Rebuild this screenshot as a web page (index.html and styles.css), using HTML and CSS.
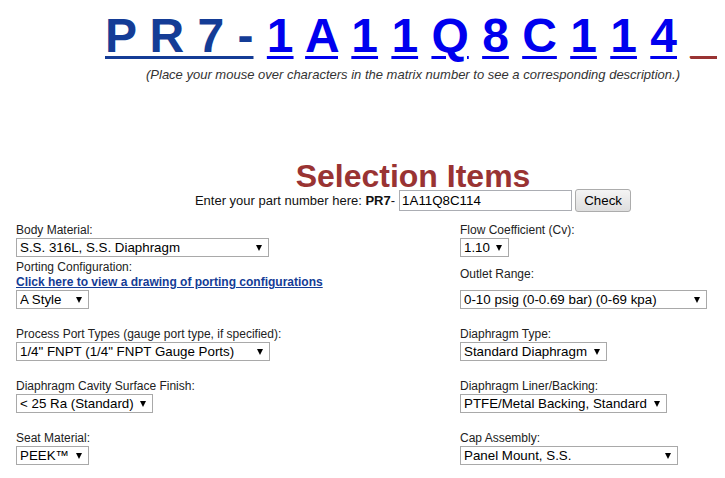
FILE: index.html
```html
<!DOCTYPE html>
<html lang="en">
<head>
    <meta charset="UTF-8">
    <meta name="viewport" content="width=device-width, initial-scale=1.0">
    <title>PR7 Part Number Configurator</title>
    <link rel="stylesheet" href="styles.css">
</head>
<body>
    <div class="page">
        <!-- matrix number, one link per character -->
        <div class="matrix">
            <a href="#" class="base">P R 7 -</a>
            <a href="#">1</a>
            <a href="#">A</a>
            <a href="#">1</a>
            <a href="#">1</a>
            <a href="#">Q</a>
            <a href="#">8</a>
            <a href="#">C</a>
            <a href="#">1</a>
            <a href="#">1</a>
            <a href="#">4</a>
            <a href="#" class="tail">_</a>
        </div>
        <div class="hint">(Place your mouse over characters in the matrix number to see a corresponding description.)</div>

        <h2 class="title">Selection Items</h2>
        <div class="partline">
            <span>Enter your part number here: <b>PR7</b>-</span>
            <input type="text" class="part-input" value="1A11Q8C114">
            <button class="check-button">Check</button>
        </div>

        <div class="fields">
            <div class="field">
                <div class="label">Body Material:</div>
                <span class="pick"><select class="sel-body"><option>S.S. 316L, S.S. Diaphragm</option></select></span>
            </div>
            <div class="field">
                <div class="label">Flow Coefficient (Cv):</div>
                <span class="pick"><select class="sel-flow"><option>1.10</option></select></span>
            </div>

            <div class="field">
                <div class="label tall">Porting Configuration:</div>
                <a href="#" class="drawing-link">Click here to view a drawing of porting configurations</a>
                <span class="pick"><select class="sel-style"><option>A Style</option></select></span>
            </div>
            <div class="field">
                <div class="label spaced">Outlet Range:</div>
                <span class="pick"><select class="sel-outlet"><option>0-10 psig (0-0.69 bar) (0-69 kpa)</option></select></span>
            </div>

            <div class="field">
                <div class="label">Process Port Types (gauge port type, if specified):</div>
                <span class="pick"><select class="sel-port"><option>1/4" FNPT (1/4" FNPT Gauge Ports)</option></select></span>
            </div>
            <div class="field">
                <div class="label">Diaphragm Type:</div>
                <span class="pick"><select class="sel-diaphragm"><option>Standard Diaphragm</option></select></span>
            </div>

            <div class="field">
                <div class="label">Diaphragm Cavity Surface Finish:</div>
                <span class="pick"><select class="sel-finish"><option>&lt; 25 Ra (Standard)</option></select></span>
            </div>
            <div class="field">
                <div class="label">Diaphragm Liner/Backing:</div>
                <span class="pick"><select class="sel-liner"><option>PTFE/Metal Backing, Standard</option></select></span>
            </div>

            <div class="field">
                <div class="label">Seat Material:</div>
                <span class="pick"><select class="sel-seat"><option>PEEK™</option></select></span>
            </div>
            <div class="field">
                <div class="label">Cap Assembly:</div>
                <span class="pick"><select class="sel-cap"><option>Panel Mount, S.S.</option></select></span>
            </div>
        </div>
    </div>
</body>
</html>
```

FILE: styles.css
```css
body {
    margin: 8px;
    background: #fff;
    font-family: "Liberation Sans", Arial, sans-serif;
    color: #222;
}
.page {
    width: 709px;
}
/* the centred blocks sit in a column whose middle is at x=413 */
.matrix {
    padding-left: 97px;
    font-size: 48px;
    font-weight: bold;
    line-height: 56px;
    text-align: center;
    white-space: nowrap;
}
.matrix a {
    color: #0000ee;
    text-decoration: underline;
    text-decoration-thickness: 3px;
    text-underline-offset: 4px;
}
.matrix a.base {
    color: #143c96;
}
.matrix a.tail {
    color: #993333;
}
.hint {
    margin-top: 3px;
    padding-left: 101px;
    font-size: 13px;
    font-style: italic;
    line-height: 15px;
    color: #333;
    text-align: center;
    white-space: nowrap;
}
.title {
    margin: 81px 0 0;
    padding-left: 101px;
    font-size: 32px;
    font-weight: bold;
    line-height: 26px;
    color: #993333;
    text-align: center;
}
.partline {
    display: flex;
    justify-content: center;
    align-items: center;
    height: 23px;
    padding-left: 101px;
    font-size: 13px;
    color: #111;
}
.part-input {
    box-sizing: border-box;
    width: 173px;
    height: 21px;
    margin: 0 0 0 4px;
    padding: 1px 2px;
    border: 1px solid #abadb3;
    font-family: "Liberation Sans", Arial, sans-serif;
    font-size: 13.333px;
    color: #000;
}
.check-button {
    box-sizing: border-box;
    width: 56px;
    height: 23px;
    margin: 0 0 0 3px;
    padding: 0;
    border: 1px solid #acacac;
    border-radius: 3px;
    background: linear-gradient(#f4f4f4, #dedede);
    font-family: "Liberation Sans", Arial, sans-serif;
    font-size: 13.333px;
    color: #000;
}
.fields {
    display: grid;
    grid-template-columns: 444px 1fr;
    grid-template-rows: 33px repeat(4, 52px);
    align-items: end;
    margin-top: 12px;
    padding-left: 8px;
}
.field {
    display: flex;
    flex-direction: column;
    align-items: flex-start;
}
.label {
    font-size: 12px;
    line-height: 12px;
    margin-bottom: 2px;
    white-space: nowrap;
}
.label.tall {
    line-height: 15px;
    margin-bottom: 0;
}
.label.spaced {
    margin-bottom: 10px;
}
.drawing-link {
    font-size: 12px;
    font-weight: bold;
    line-height: 15px;
    color: #143c96;
    text-decoration: underline;
    white-space: nowrap;
}
.pick {
    position: relative;
    display: inline-block;
}
.pick::after {
    content: "";
    position: absolute;
    right: 7px;
    top: 7px;
    border-left: 3px solid transparent;
    border-right: 3px solid transparent;
    border-top: 6px solid #000;
    pointer-events: none;
}
.pick select {
    -webkit-appearance: none;
    appearance: none;
    display: block;
    box-sizing: border-box;
    height: 19px;
    margin: 0;
    padding: 0 3px;
    border: 1px solid #a9a9a9;
    border-radius: 0;
    background: #fff;
    font-family: "Liberation Sans", Arial, sans-serif;
    font-size: 13.333px;
    line-height: 15px;
    color: #000;
}
.sel-body { width: 253px; }
.sel-style { width: 73px; }
.sel-port { width: 254px; }
.sel-finish { width: 137px; }
.sel-seat { width: 73px; }
.sel-flow { width: 49px; }
.sel-outlet { width: 247px; }
.sel-diaphragm { width: 147px; }
.sel-liner { width: 207px; }
.sel-cap { width: 218px; }
```
